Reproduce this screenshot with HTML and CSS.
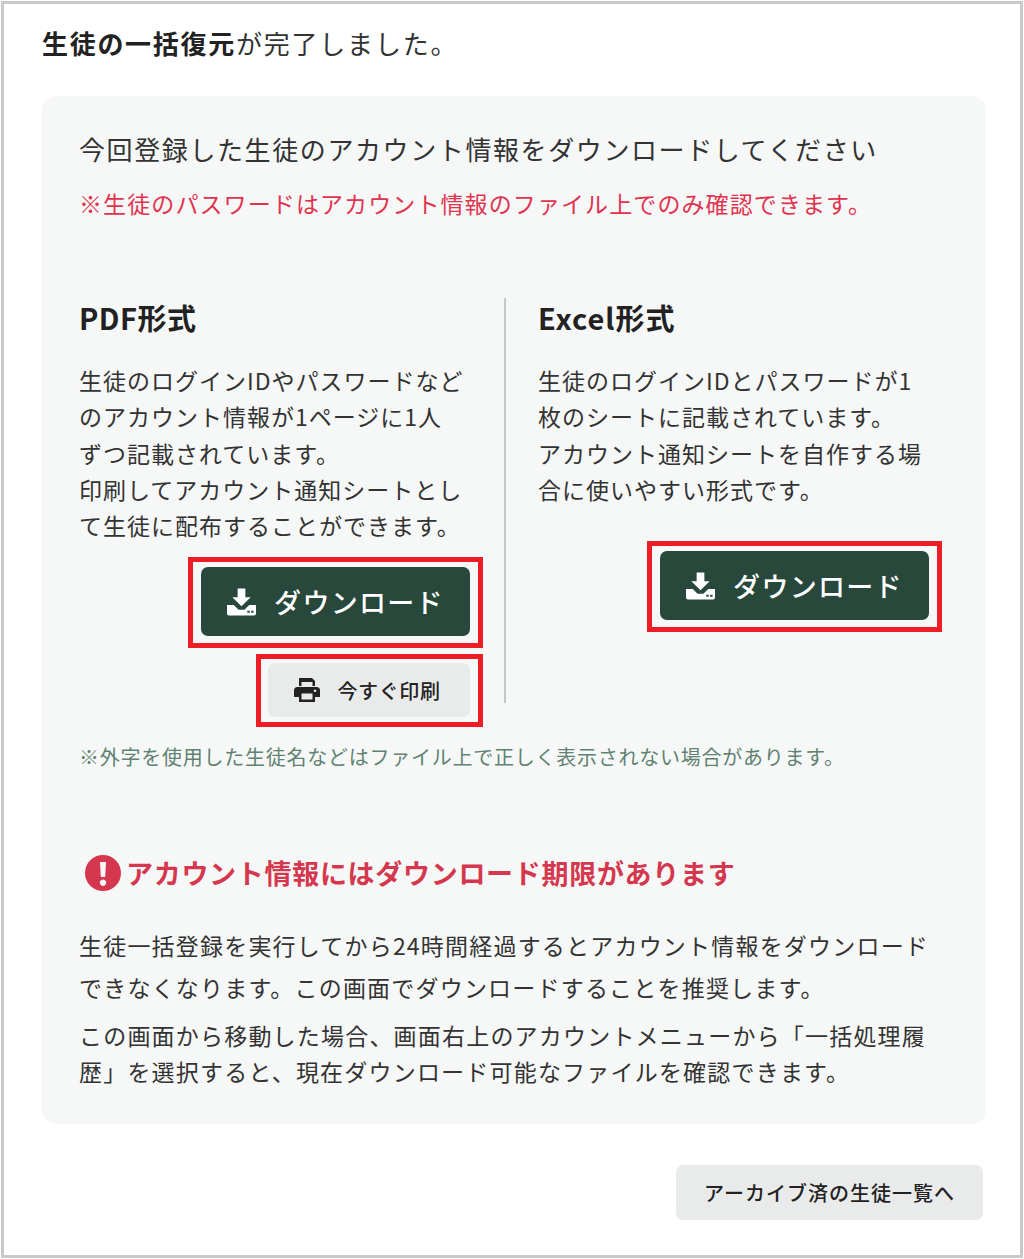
FILE: index.html
```html
<!DOCTYPE html>
<html lang="ja">
<head>
  <meta charset="UTF-8">
  <title>生徒の一括復元</title>
  <link rel="stylesheet" href="styles.css">
</head>
<body>
  <div class="frame">
    <p class="lead"><strong>生徒の一括復元</strong>が完了しました。</p>

    <div class="panel">
      <p class="panel-title">今回登録した生徒のアカウント情報をダウンロードしてください</p>
      <p class="panel-warn">※生徒のパスワードはアカウント情報のファイル上でのみ確認できます。</p>

      <div class="formats">
        <div class="format format-pdf">
          <h3>PDF形式</h3>
          <p>生徒のログインIDやパスワードなど<br>のアカウント情報が1ページに1人<br>ずつ記載されています。<br>印刷してアカウント通知シートとし<br>て生徒に配布することができます。</p>
          <div class="marks">
            <div class="mark mark-main">
              <a href="#" class="btn-dl">
                <svg class="icon-dl" viewBox="0 0 30 28"><path d="M11 0h8v9h5.500L15 18.500 5.500 9H11z"/><path fill-rule="evenodd" d="M0 17h7l5 5h6l5-5h7v9a2 2 0 0 1-2 2H2a2 2 0 0 1-2-2zM21 23h2.500v2H21zM25 23h2.500v2H25z"/></svg>
                ダウンロード
              </a>
            </div>
            <div class="mark mark-print">
              <a href="#" class="btn-print">
                <svg class="icon-print" viewBox="0 0 26 26"><path fill-rule="evenodd" d="M5 1h13l3 3v5h-2.500V5H7.500v4H5zM3.500 10h19A3.500 3.500 0 0 1 26 13.500V20h-5v5H5v-5H0v-6.500A3.500 3.500 0 0 1 3.500 10zM7.500 16.500V22.500h11v-6zM21 12.500a1.300 1.300 0 1 0 .01 0z"/></svg>
                今すぐ印刷
              </a>
            </div>
          </div>
        </div>

        <div class="format format-excel">
          <h3>Excel形式</h3>
          <p>生徒のログインIDとパスワードが1<br>枚のシートに記載されています。<br>アカウント通知シートを自作する場<br>合に使いやすい形式です。</p>
          <div class="marks">
            <div class="mark mark-main">
              <a href="#" class="btn-dl">
                <svg class="icon-dl" viewBox="0 0 30 28"><path d="M11 0h8v9h5.500L15 18.500 5.500 9H11z"/><path fill-rule="evenodd" d="M0 17h7l5 5h6l5-5h7v9a2 2 0 0 1-2 2H2a2 2 0 0 1-2-2zM21 23h2.500v2H21zM25 23h2.500v2H25z"/></svg>
                ダウンロード
              </a>
            </div>
          </div>
        </div>
      </div>

      <p class="note">※外字を使用した生徒名などはファイル上で正しく表示されない場合があります。</p>

      <h3 class="limit-title">
        <svg class="icon-alert" viewBox="0 0 36 36"><path fill-rule="evenodd" d="M18 0a18 18 0 1 1 0 36a18 18 0 0 1 0-36zM15 7l.8 15h4.400L21 7zM18 24.500a3.200 3.200 0 1 0 .01 0z"/></svg>
        アカウント情報にはダウンロード期限があります
      </h3>
      <p class="limit-text">生徒一括登録を実行してから24時間経過するとアカウント情報をダウンロードできなくなります。この画面でダウンロードすることを推奨します。</p>
      <p class="limit-sub">この画面から移動した場合、画面右上のアカウントメニューから「一括処理履歴」を選択すると、現在ダウンロード可能なファイルを確認できます。</p>
    </div>

    <div class="footer">
      <a href="#" class="btn-list">アーカイブ済の生徒一覧へ</a>
    </div>
  </div>
</body>
</html>
```

FILE: styles.css
```css
* {
  box-sizing: border-box;
}

html, body {
  margin: 0;
  background: #fff;
}

body {
  padding: 1px;
  height: 1259px;
  font-family: "Noto Sans CJK JP", "Noto Sans", sans-serif;
  color: #333;
}

p, h3 {
  margin: 0;
}

a {
  text-decoration: none;
}

.frame {
  height: 1257px;
  border: 3px solid #c9c9c9;
  padding: 0 34px 0 38px;
}

.lead {
  height: 92px;
  padding-top: 19px;
  font-size: 26px;
  line-height: 40px;
  letter-spacing: 1.8px;
}

.lead strong {
  font-weight: 700;
  color: #222;
  letter-spacing: 1.7px;
}

/* ===== PANEL ==== */
.panel {
  height: 1028px;
  padding: 33px 37px 0;
  background-color: #f6f8f7;
  border-radius: 14px;
}

.panel-title {
  font-size: 26px;
  line-height: 40px;
  letter-spacing: 1.6px;
}

.panel-warn {
  margin-top: 14px;
  font-size: 23px;
  line-height: 40px;
  letter-spacing: 1.1px;
  color: #e0334f;
}

.formats {
  display: flex;
  margin-top: 75px;
  height: 405px;
}

.format {
  width: 427px;
}

.format h3 {
  font-size: 29px;
  line-height: 38px;
  color: #222;
  margin-bottom: 26px;
  letter-spacing: 0.5px;
}

.format-excel h3 {
  letter-spacing: 1px;
}

.format p {
  font-size: 23px;
  line-height: 36.300px;
  letter-spacing: 1px;
}

.format-pdf {
  padding-right: 34px;
  border-right: 2px solid #c6c8c7;
}

.format-excel {
  padding-left: 32px;
  width: 423px;
}

/* red marks around the buttons */
.marks {
  display: flex;
  flex-direction: column;
  align-items: flex-end;
  gap: 6px;
  margin-right: -13px;
}

.format-pdf .marks {
  margin-top: 14px;
}

.format-excel .marks {
  margin-top: 34px;
}

.mark {
  border: 5px solid #ee1c25;
  background: #f6f8f7;
}

.mark-main {
  width: 295px;
  height: 91px;
  padding: 5px 8px 0;
}

.mark-print {
  width: 227px;
  height: 73px;
  padding: 4px 8px 0 7px;
}

.btn-dl {
  display: flex;
  align-items: center;
  justify-content: center;
  gap: 18px;
  height: 69px;
  background-color: #27483b;
  border-radius: 7px;
  color: #fff;
  font-size: 27px;
  font-weight: 500;
  letter-spacing: 1.3px;
}

.icon-dl {
  width: 29px;
  height: 28px;
  fill: #fff;
}

.btn-print {
  display: flex;
  align-items: center;
  justify-content: center;
  gap: 18px;
  height: 54px;
  padding-right: 4px;
  background-color: #e9ebea;
  border-radius: 7px;
  color: #222;
  font-size: 20px;
  font-weight: 500;
  letter-spacing: 0.6px;
}

.icon-print {
  width: 26px;
  height: 26px;
  fill: #222;
}

.note {
  margin-top: 36px;
  font-size: 20px;
  line-height: 36px;
  letter-spacing: 0.75px;
  color: #5f8272;
}

/* ===== LIMIT ==== */
.limit-title {
  display: flex;
  align-items: center;
  gap: 5px;
  margin-top: 77px;
  margin-left: 6px;
  font-size: 27px;
  line-height: 42px;
  font-weight: 700;
  letter-spacing: 0.7px;
  color: #d5384e;
}

.icon-alert {
  width: 36px;
  height: 36px;
  fill: #d5384e;
}

.limit-text {
  margin-top: 30px;
  font-size: 23px;
  line-height: 42px;
  letter-spacing: 1.2px;
}

.limit-sub {
  margin-top: 9px;
  font-size: 23px;
  line-height: 36px;
  letter-spacing: 1.2px;
}

/* ===== FOOTER ==== */
.footer {
  display: flex;
  justify-content: flex-end;
  padding: 41px 3px 0 0;
}

.btn-list {
  display: flex;
  align-items: center;
  justify-content: center;
  width: 307px;
  height: 55px;
  background-color: #e9ebea;
  border-radius: 7px;
  color: #222;
  font-size: 20px;
  font-weight: 500;
  letter-spacing: 1px;
}
```
